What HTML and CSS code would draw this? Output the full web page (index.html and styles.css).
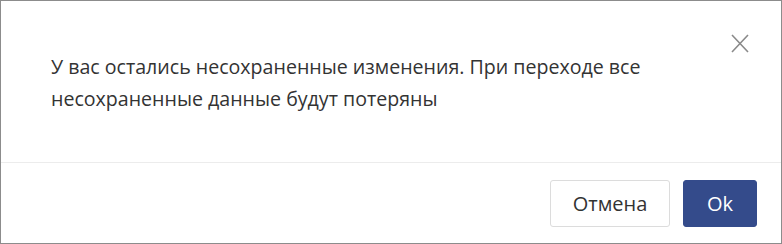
FILE: index.html
```html
<!DOCTYPE html>
<html lang="ru">
<head>
<meta charset="utf-8">
<link rel="stylesheet" href="styles.css">
</head>
<body>
<div class="modal">
  <div class="modal-body">
    <p class="message">У вас остались несохраненные изменения. При переходе все несохраненные данные будут потеряны</p>
    <button class="close" aria-label="Закрыть">
      <svg width="18" height="19" viewBox="0 0 18 19"><path d="M1 1L17 18M17 1L1 18" stroke="#8a8a8a" stroke-width="1.6" fill="none"/></svg>
    </button>
  </div>
  <div class="modal-footer">
    <button class="btn btn-cancel">Отмена</button>
    <button class="btn btn-ok">Ok</button>
  </div>
</div>
</body>
</html>
```
FILE: styles.css
```css
html, body {
  margin: 0;
  padding: 0;
  background: #fff;
}
.modal {
  box-sizing: border-box;
  width: 782px;
  height: 244px;
  border: 1px solid #8c8c8c;
  display: flex;
  flex-direction: column;
  font-family: "Open Sans", "Noto Sans", sans-serif;
  color: #333;
}
.modal-body {
  height: 162px;
  box-sizing: border-box;
  border-bottom: 1px solid #ececec;
  display: flex;
  align-items: flex-start;
  padding: 50px 32px 0 50px;
  gap: 40px;
}
.message {
  margin: 0;
  font-size: 19.6px;
  line-height: 32px;
  width: 640px;
}
.close {
  margin-top: -17px;
  margin-left: auto;
  padding: 0;
  border: 0;
  background: none;
  width: 18px;
  height: 19px;
  display: flex;
}
.modal-footer {
  flex: 1;
  display: flex;
  align-items: center;
  justify-content: flex-end;
  gap: 13px;
  padding: 0 24px 0 0;
}
.btn {
  box-sizing: border-box;
  height: 47px;
  border-radius: 3px;
  font-family: "Open Sans", "Noto Sans", sans-serif;
  font-size: 20px;
  padding: 0;
}
.btn-cancel {
  width: 120px;
  background: #fff;
  border: 1px solid #dcdcdc;
  color: #333;
}
.btn-ok {
  width: 74px;
  background: #344b8b;
  border: 1px solid #344b8b;
  color: #fff;
}
```
